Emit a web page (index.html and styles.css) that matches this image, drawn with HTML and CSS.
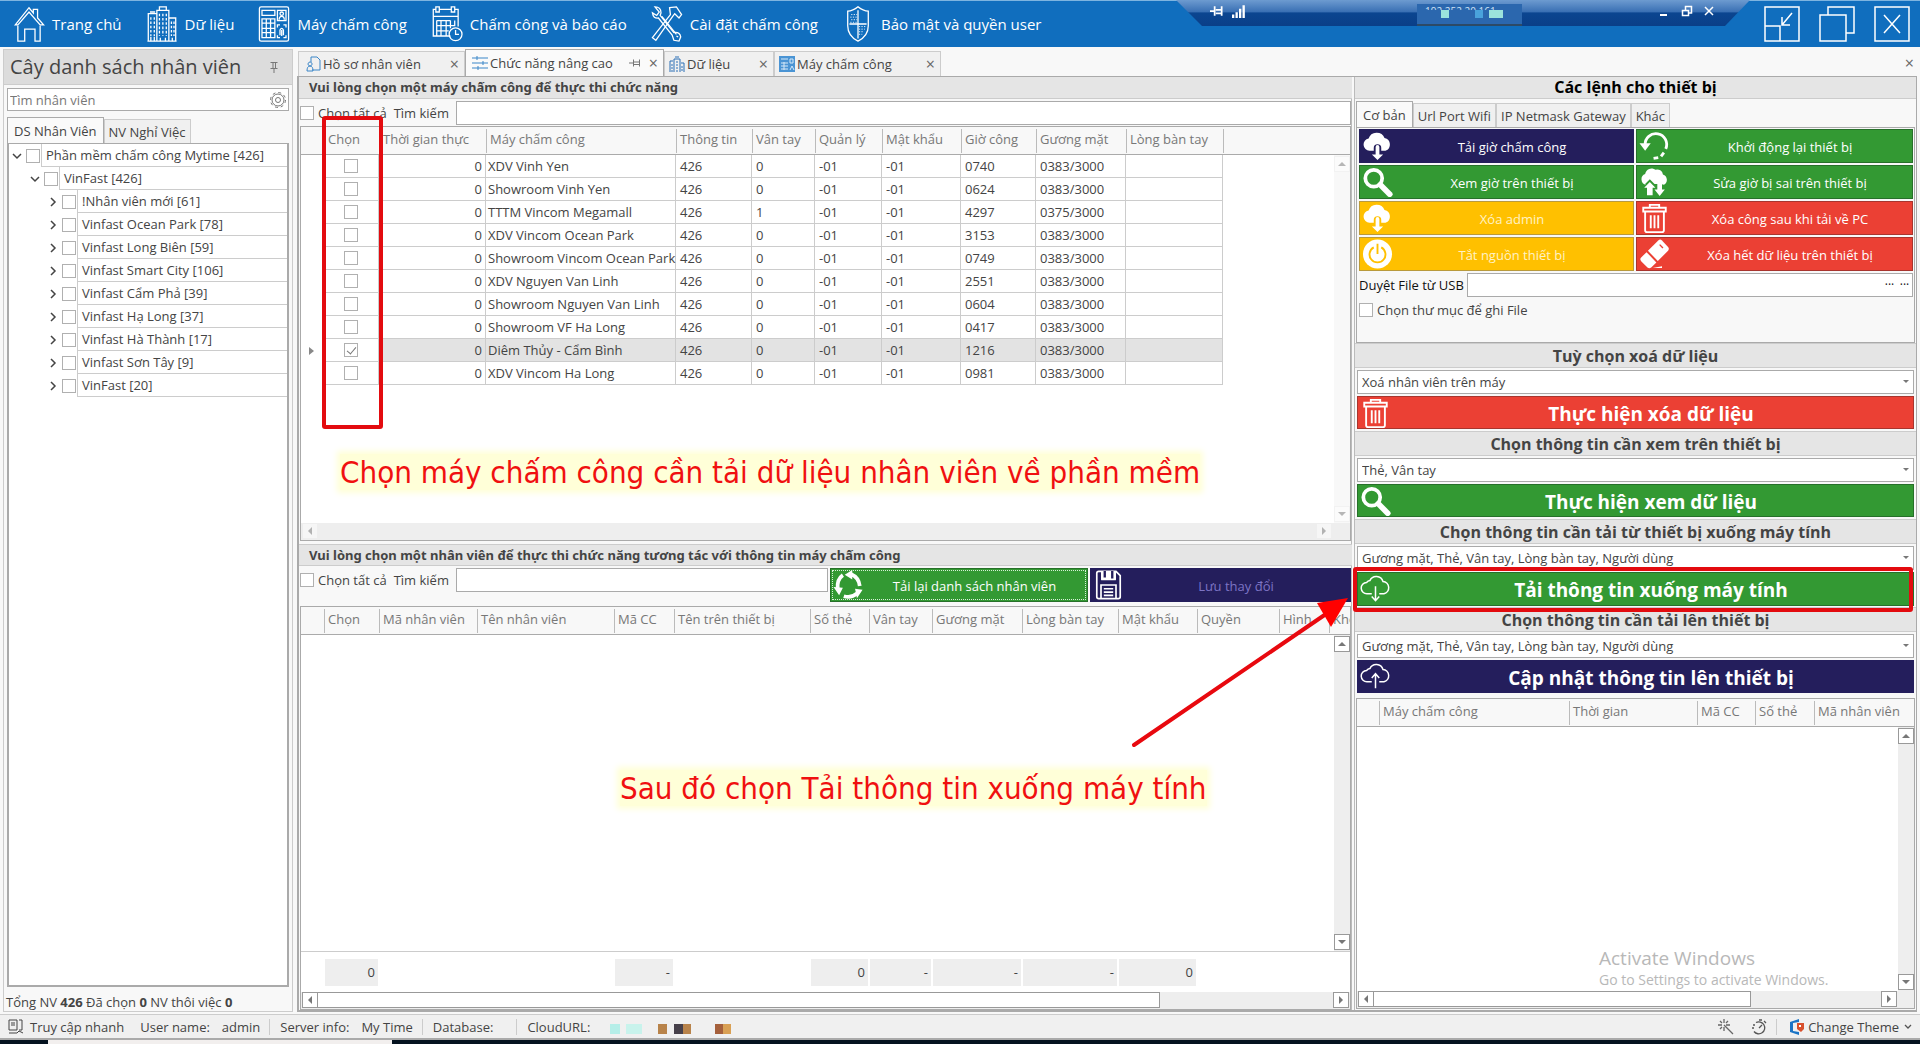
FILE: index.html
```html
<!DOCTYPE html>
<html lang="vi">
<head>
<meta charset="utf-8">
<title>Phần mềm chấm công Mytime</title>
<link rel="stylesheet" href="styles.css">
</head>
<body>
<svg class="defs" aria-hidden="true">
  <symbol id="i-cloud-down" viewBox="0 0 32 32"><path fill="currentColor" d="M12 21H7.500a6.500 6.500 0 0 1-1-12.900A9 9 0 0 1 23.500 7.500 7 7 0 0 1 24.500 21H20v-3a4 4 0 0 0-8 0z"/><path fill="currentColor" d="M14 17a2 2 0 0 1 4 0v8h4l-6 6-6-6h4z"/></symbol>
  <symbol id="i-cloud-updown" viewBox="0 0 32 32"><path fill="currentColor" d="M7 19a6 6 0 0 1-1-11.500A7 7 0 0 1 17 3a6 6 0 0 1 8 5 6 6 0 0 1 1 11l-3-1h-7l-5-5-5 5z"/><path fill="currentColor" d="M8 30V22H5l6-6 6 6h-3v8zM19 18h5v6h3l-5.500 7-5.500-7h3z"/></symbol>
  <symbol id="i-search" viewBox="0 0 32 32"><circle cx="12" cy="12" r="9" fill="none" stroke="currentColor" stroke-width="4"/><path d="M19 19l10 10" stroke="currentColor" stroke-width="6" stroke-linecap="round"/></symbol>
  <symbol id="i-restart" viewBox="0 0 32 32"><g fill="none" stroke="currentColor" stroke-width="3"><path d="M6 15A11.500 11.500 0 1 1 28 19"/><path d="M26 23l-3 4M20 28.500l-5 .8"/></g><path d="M0 13h12l-6 8z" fill="currentColor"/></symbol>
  <symbol id="i-trash" viewBox="0 0 32 32"><g fill="none" stroke="currentColor" stroke-width="2"><path d="M4 5h24v4H4zM11 5V2h10v3M6 9v20q0 2 2 2h16q2 0 2-2V9" /><path d="M12 13v14M16 13v14M20 13v14"/></g></symbol>
  <symbol id="i-power" viewBox="0 0 32 32"><circle cx="16" cy="16" r="15.500" fill="#fff"/><g fill="none" stroke="#ffc000" stroke-width="2"><path d="M12 9a8.500 8.500 0 1 0 8 0M16 5v11"/></g></symbol>
  <symbol id="i-eraser" viewBox="0 0 32 32"><path fill="currentColor" d="M20 1.500q2-2 4 0l6.500 7q1.500 2 0 4L19.500 23.500 9 12.500z"/><path fill="currentColor" d="M7.500 14l10.500 11-5.500 5.500q-2 1.500-4 0L2 24q-2-2-.5-4zM14 31l10-2v2z"/><path d="M21.500 6l3.500 3.500" stroke="#eb4034" stroke-width="1.500"/></symbol>
  <symbol id="i-cloud-line-down" viewBox="0 0 32 32"><g fill="none" stroke="currentColor" stroke-width="1.600"><path d="M12 21H7a6 6 0 0 1-.5-12A6 6 0 0 1 10 7a7.500 7.500 0 0 1 14 1 6.600 6.600 0 0 1 1 13h-5M16 13v15M12 24l4 4.500 4-4.500"/></g></symbol>
  <symbol id="i-cloud-line-up" viewBox="0 0 32 32"><g fill="none" stroke="currentColor" stroke-width="1.600"><path d="M12 21H7a6 6 0 0 1-.5-12A6 6 0 0 1 10 7a7.500 7.500 0 0 1 14 1 6.600 6.600 0 0 1 1 13h-5M16 28V13M12 17l4-4.500 4 4.500"/></g></symbol>
  <symbol id="i-recycle" viewBox="0 0 32 32"><g fill="none" stroke="currentColor" stroke-width="4"><path d="M10 5.500Q3.500 10 4.500 20"/><path d="M19 4.500Q27 8 28 17"/><path d="M25 25Q19 30.500 11 28"/></g><path fill="currentColor" d="M0 18l10 1-4 8zM20 0v10l-8-5zM23 20l8 1-6 9z"/></symbol>
  <symbol id="i-save" viewBox="0 0 28 32"><g fill="none" stroke="currentColor" stroke-width="1.800"><path d="M1.500 3.500q0-2 2-2H22l4.500 4.500v22.500q0 2-2 2h-21q-2 0-2-2z"/><path d="M6 30V16h16v14M9 20h10M9 23.500h10M9 27h10"/></g><path fill="currentColor" d="M6 1h16v9q0 1-1 1H7q-1 0-1-1z"/><path d="M10 1v7M18 1v8" stroke="#241e5c" stroke-width="2.500"/></symbol>
  <symbol id="i-pin" viewBox="0 0 12 12"><path d="M0 6h4M4.500 2.500v7M5 5h5M5 7.500h5M10.500 2.500v7" fill="none" stroke="currentColor"/></symbol>
</svg>

<header class="topbar">
  <nav class="menu">
    <a href="#" class="menu-item"><svg class="menu-icon" viewBox="0 0 36 42"><g fill="none" stroke="#fff" stroke-width="1.500"><path d="M2 22L18 2l5 6V4h5v10l7 8h-4L18 7 5 22zM5 23v18h8V27h12v14h6V23"/></g></svg>Trang chủ</a>
    <a href="#" class="menu-item"><svg class="menu-icon" viewBox="0 0 36 42"><g fill="none" stroke="#fff" stroke-width="1.500"><path d="M2 41V9h10M12 41V5h14v36M15 5V1h8v4M26 14h8v27M1 41h34M4 7h6"/><path d="M15 9v26M19 9v26M23 9v26M5 13v22M9 13v22M29 18v17M32 18v17" stroke-dasharray="3 2"/><path d="M5 36v5M9 36v5M16 37v4M22 37v4M30 37v4"/></g></svg>Dữ liệu</a>
    <a href="#" class="menu-item"><svg class="menu-icon" viewBox="0 0 36 42"><g fill="none" stroke="#fff" stroke-width="1.500"><rect x="1" y="1" width="34" height="40" rx="2"/><path d="M4 5h15v6H4zM4 15h15v22H4zM4 20h15M4 26h15M4 31h15M9 15v22M14 15v22M22 5h10v12H22zM24 16q0-4 3-4t3 4"/><circle cx="27" cy="9" r="2"/><path d="M22 25v-3h3M29 22h3v3M22 34v3h3M29 37h3v-3M25 34v-6q2-4 4 0v6M27 28v7"/></g></svg>Máy chấm công</a>
    <a href="#" class="menu-item"><svg class="menu-icon" viewBox="0 0 36 42"><g fill="none" stroke="#fff" stroke-width="1.500"><path d="M22 35H2V4h3M9 4h14M27 4h4v20M2 12h29M5 1h4v6H5zM23 1h4v6h-4zM6 17h16M6 23h16M6 29h14M6 17v12M11 17v18M17 17v18M22 17v9M27 17v6h-5M6 35V29"/><circle cx="28" cy="33" r="7.500"/><path d="M28 28v5h4"/></g></svg>Chấm công và báo cáo</a>
    <a href="#" class="menu-item"><svg class="menu-icon" viewBox="0 0 36 42"><g fill="none" stroke="#fff" stroke-width="1.500"><path d="M4 1q7 0 7 7l-1 3 16 20q7-1 8 5l-2 5-6-1-2-6L8 14q-6 1-7-6l5 3 3-4z"/><path d="M21 2l8-1 6 9-3 4-5-5-3 4L5 40l-4-3 21-27zM29 35l2 1M12 12l17 21"/></g></svg>Cài đặt chấm công</a>
    <a href="#" class="menu-item"><svg class="menu-icon menu-icon-narrow" viewBox="0 0 28 42"><g fill="none" stroke="#fff" stroke-width="1.500"><path d="M14 1q6 5 12 5v17q0 12-12 18Q2 35 2 23V6q6 0 12-5z"/><path d="M14 5v33M4 21h20"/></g><path d="M6 10h7M5 13h8M6 16h7M5 19h8M15 24h8M15 27h7M15 30h6M15 33h4" stroke="#fff" stroke-dasharray="1.500 1.500"/></svg>Bảo mật và quyền user</a>
  </nav>
  <div class="window-controls">
    <button aria-label="Thu nhỏ"><svg viewBox="0 0 36 36"><path d="M1 1h34v34H1zM1 20h15v15M28 7L18 19M18 11v8h8" fill="none" stroke="#fff" stroke-width="1.500"/></svg></button>
    <button aria-label="Khôi phục"><svg viewBox="0 0 36 36"><path d="M1 9h26v26H1zM9 9V1h26v26h-8" fill="none" stroke="#fff" stroke-width="1.500"/></svg></button>
    <button aria-label="Đóng"><svg viewBox="0 0 36 36"><path d="M1 1h34v34H1zM10 9l16 18M26 9L10 27" fill="none" stroke="#fff" stroke-width="1.500"/></svg></button>
  </div>
  <div class="remote-bar">
    <svg class="remote-pin" viewBox="0 0 12 12"><path d="M0 6h4M4 2v8M5 5h5M5 8h5M10 2v8" stroke="#fff" stroke-width="1.500" fill="none"/></svg>
    <svg class="remote-signal" viewBox="0 0 12 12"><path d="M1 12V9M4 12V7M7 12V4M10 12V1" stroke="#fff" stroke-width="2"/></svg>
    <div class="remote-host"><span>192.252.20.161</span><div class="remote-mask"><i></i><i></i><i></i></div></div>
    <svg class="remote-win" viewBox="0 0 56 14"><path d="M0 11h7" stroke="#fff" stroke-width="2"/><path d="M22.500 6.500h6v5h-6zM25.500 6V2.500h6V9H29M45 3l8 8M53 3l-8 8" fill="none" stroke="#fff" stroke-width="1.500"/></svg>
  </div>
</header>

<main class="workspace">
  <aside class="sidebar">
    <h1 class="sidebar-title">Cây danh sách nhân viên<svg class="pin pin-down"><use href="#i-pin"/></svg></h1>
    <div class="search-box"><input type="text" placeholder="Tìm nhân viên" aria-label="Tìm nhân viên"><svg viewBox="0 0 18 18"><g fill="none" stroke="#777"><circle cx="9" cy="9" r="2.500"/><circle cx="9" cy="9" r="6"/><circle cx="9" cy="9" r="7.500" stroke-dasharray="3 2.900"/></g></svg></div>
    <div class="tabs side-tabs"><button class="tab active">DS Nhân Viên</button><button class="tab">NV Nghỉ Việc</button></div>
    <ul class="tree">
      <li class="lv0 open"><svg viewBox="0 0 10 10"><path d="M1 3l4 4 4-4"/></svg><label><input type="checkbox"><span>Phần mềm chấm công Mytime [426]</span></label></li>
      <li class="lv1 open"><svg viewBox="0 0 10 10"><path d="M1 3l4 4 4-4"/></svg><label><input type="checkbox"><span>VinFast [426]</span></label></li>
      <li class="lv2"><svg viewBox="0 0 10 10"><path d="M3 1l4 4-4 4"/></svg><label><input type="checkbox"><span>!Nhân viên mới [61]</span></label></li>
      <li class="lv2"><svg viewBox="0 0 10 10"><path d="M3 1l4 4-4 4"/></svg><label><input type="checkbox"><span>Vinfast Ocean Park [78]</span></label></li>
      <li class="lv2"><svg viewBox="0 0 10 10"><path d="M3 1l4 4-4 4"/></svg><label><input type="checkbox"><span>Vinfast Long Biên [59]</span></label></li>
      <li class="lv2"><svg viewBox="0 0 10 10"><path d="M3 1l4 4-4 4"/></svg><label><input type="checkbox"><span>Vinfast Smart City [106]</span></label></li>
      <li class="lv2"><svg viewBox="0 0 10 10"><path d="M3 1l4 4-4 4"/></svg><label><input type="checkbox"><span>Vinfast Cẩm Phả [39]</span></label></li>
      <li class="lv2"><svg viewBox="0 0 10 10"><path d="M3 1l4 4-4 4"/></svg><label><input type="checkbox"><span>Vinfast Hạ Long [37]</span></label></li>
      <li class="lv2"><svg viewBox="0 0 10 10"><path d="M3 1l4 4-4 4"/></svg><label><input type="checkbox"><span>Vinfast Hà Thành [17]</span></label></li>
      <li class="lv2"><svg viewBox="0 0 10 10"><path d="M3 1l4 4-4 4"/></svg><label><input type="checkbox"><span>Vinfast Sơn Tây [9]</span></label></li>
      <li class="lv2"><svg viewBox="0 0 10 10"><path d="M3 1l4 4-4 4"/></svg><label><input type="checkbox"><span>VinFast [20]</span></label></li>
    </ul>
    <p class="totals">Tổng NV <b>426</b> Đã chọn <b>0</b> NV thôi việc <b>0</b></p>
  </aside>

  <section class="document">
    <div class="doc-tabs">
      <button class="doc-tab tab-profile"><svg viewBox="0 0 16 16"><path d="M6 1h6l3 3v10H7M6 1v5M5 6a2 2 0 1 0 .1 0M2 15q0-5 3-5t3 5z" fill="none" stroke="#3b86c8"/></svg><span>Hồ sơ nhân viên</span><i>×</i></button>
      <button class="doc-tab tab-advanced active"><svg viewBox="0 0 16 16"><path d="M0 3h16M0 8h16M0 13h16M5 1v4M11 6v4M6 11v4" stroke="#3b86c8"/></svg><span>Chức năng nâng cao</span><svg class="pin"><use href="#i-pin"/></svg><i>×</i></button>
      <button class="doc-tab tab-data"><svg viewBox="0 0 16 16"><path d="M1 16V5h3M5 16V3h6v13M12 7h3v9M6 1h4" fill="none" stroke="#2a6fb5"/><path d="M3 8v8M8 5v11M13 10v6" stroke="#2a6fb5" stroke-dasharray="2 1"/></svg><span>Dữ liệu</span><i>×</i></button>
      <button class="doc-tab tab-device"><svg viewBox="0 0 16 16"><path d="M0 0h16v16H0z" fill="#4a94d4"/><path d="M2 3h7M2 7h7M2 10h7M2 13h7M5 6v8M11 3h3v4h-3zM11 14l2-4 2 4" stroke="#d6e9f8" fill="none"/></svg><span>Máy chấm công</span><i>×</i></button>
      <button class="close-all" aria-label="Đóng tab">×</button>
    </div>

    <div class="doc-body">
      <div class="center">
        <h2 class="bar-title">Vui lòng chọn một máy chấm công để thực thi chức năng</h2>
        <div class="filter"><label class="check"><input type="checkbox">Chọn tất cả</label><label for="find-device">Tìm kiếm</label><input id="find-device" class="field" type="text"></div>
        <div class="grid device-grid">
          <table>
            <colgroup><col style="width:23px"><col style="width:55px"><col style="width:107px"><col style="width:190px"><col style="width:76px"><col style="width:63px"><col style="width:67px"><col style="width:79px"><col style="width:75px"><col style="width:90px"><col style="width:97px"><col></colgroup>
            <thead><tr><th></th><th>Chọn</th><th>Thời gian thực</th><th>Máy chấm công</th><th>Thông tin</th><th>Vân tay</th><th>Quản lý</th><th>Mật khẩu</th><th>Giờ công</th><th>Gương mặt</th><th>Lòng bàn tay</th><th></th></tr></thead>
            <tbody>
              <tr><td></td><td><input type="checkbox" aria-label="Chọn"></td><td>0</td><td>XDV Vinh Yen</td><td>426</td><td>0</td><td>-01</td><td>-01</td><td>0740</td><td>0383/3000</td><td></td><td></td></tr>
              <tr><td></td><td><input type="checkbox" aria-label="Chọn"></td><td>0</td><td>Showroom Vinh Yen</td><td>426</td><td>0</td><td>-01</td><td>-01</td><td>0624</td><td>0383/3000</td><td></td><td></td></tr>
              <tr><td></td><td><input type="checkbox" aria-label="Chọn"></td><td>0</td><td>TTTM Vincom Megamall</td><td>426</td><td>1</td><td>-01</td><td>-01</td><td>4297</td><td>0375/3000</td><td></td><td></td></tr>
              <tr><td></td><td><input type="checkbox" aria-label="Chọn"></td><td>0</td><td>XDV Vincom Ocean Park</td><td>426</td><td>0</td><td>-01</td><td>-01</td><td>3153</td><td>0383/3000</td><td></td><td></td></tr>
              <tr><td></td><td><input type="checkbox" aria-label="Chọn"></td><td>0</td><td>Showroom Vincom Ocean Park</td><td>426</td><td>0</td><td>-01</td><td>-01</td><td>0749</td><td>0383/3000</td><td></td><td></td></tr>
              <tr><td></td><td><input type="checkbox" aria-label="Chọn"></td><td>0</td><td>XDV Nguyen Van Linh</td><td>426</td><td>0</td><td>-01</td><td>-01</td><td>2551</td><td>0383/3000</td><td></td><td></td></tr>
              <tr><td></td><td><input type="checkbox" aria-label="Chọn"></td><td>0</td><td>Showroom Nguyen Van Linh</td><td>426</td><td>0</td><td>-01</td><td>-01</td><td>0604</td><td>0383/3000</td><td></td><td></td></tr>
              <tr><td></td><td><input type="checkbox" aria-label="Chọn"></td><td>0</td><td>Showroom VF Ha Long</td><td>426</td><td>0</td><td>-01</td><td>-01</td><td>0417</td><td>0383/3000</td><td></td><td></td></tr>
              <tr class="selected"><td><svg viewBox="0 0 6 8"><path d="M0 0l5 4-5 4z" fill="#888"/></svg></td><td><input type="checkbox" aria-label="Chọn" checked></td><td>0</td><td>Diêm Thủy - Cẩm Bình</td><td>426</td><td>0</td><td>-01</td><td>-01</td><td>1216</td><td>0383/3000</td><td></td><td></td></tr>
              <tr><td></td><td><input type="checkbox" aria-label="Chọn"></td><td>0</td><td>XDV Vincom Ha Long</td><td>426</td><td>0</td><td>-01</td><td>-01</td><td>0981</td><td>0383/3000</td><td></td><td></td></tr>
            </tbody>
          </table>
          <div class="vscroll off"><span class="arr up"></span><span class="arr down"></span></div>
          <div class="hscroll off"><span class="arr left"></span><span class="arr right"></span></div>
        </div>

        <h2 class="bar-title second">Vui lòng chọn một nhân viên để thực thi chức năng tương tác với thông tin máy chấm công</h2>
        <div class="filter filter-actions"><label class="check"><input type="checkbox">Chọn tất cả</label><label for="find-staff">Tìm kiếm</label><input id="find-staff" class="field" type="text">
          <button class="cmd green focus"><svg><use href="#i-recycle"/></svg><span>Tải lại danh sách nhân viên</span></button>
          <button class="cmd navy muted"><svg><use href="#i-save"/></svg><span>Lưu thay đổi</span></button>
        </div>
        <div class="grid staff-grid">
          <table>
            <colgroup><col style="width:23px"><col style="width:55px"><col style="width:98px"><col style="width:137px"><col style="width:60px"><col style="width:136px"><col style="width:59px"><col style="width:63px"><col style="width:90px"><col style="width:96px"><col style="width:79px"><col style="width:82px"><col style="width:50px"><col></colgroup>
            <thead><tr><th></th><th>Chọn</th><th>Mã nhân viên</th><th>Tên nhân viên</th><th>Mã CC</th><th>Tên trên thiết bị</th><th>Số thẻ</th><th>Vân tay</th><th>Gương mặt</th><th>Lòng bàn tay</th><th>Mật khẩu</th><th>Quyền</th><th>Hình</th><th>Khó</th></tr></thead>
          </table>
          <div class="vscroll"><span class="arr up"></span><span class="arr down"></span></div>
          <div class="summary"><span></span><b>0</b><span></span><span></span><b>-</b><span></span><b>0</b><b>-</b><b>-</b><b>-</b><b>0</b></div>
          <div class="hscroll"><span class="arr left"></span><span class="thumb"></span><span class="arr right"></span></div>
        </div>
      </div>

      <div class="commands">
        <h2 class="bar-title big dark">Các lệnh cho thiết bị</h2>
        <div class="tabs cmd-tabs"><button class="tab active">Cơ bản</button><button class="tab">Url Port Wifi</button><button class="tab">IP Netmask Gateway</button><button class="tab">Khác</button></div>
        <div class="tab-page">
          <div class="cmd-grid">
            <button class="cmd navy"><svg><use href="#i-cloud-down"/></svg><span>Tải giờ chấm công</span></button>
            <button class="cmd green"><svg><use href="#i-restart"/></svg><span>Khởi động lại thiết bị</span></button>
            <button class="cmd green"><svg><use href="#i-search"/></svg><span>Xem giờ trên thiết bị</span></button>
            <button class="cmd green"><svg><use href="#i-cloud-updown"/></svg><span>Sửa giờ bị sai trên thiết bị</span></button>
            <button class="cmd amber"><svg><use href="#i-cloud-down"/></svg><span>Xóa admin</span></button>
            <button class="cmd red"><svg><use href="#i-trash"/></svg><span>Xóa công sau khi tải về PC</span></button>
            <button class="cmd amber"><svg><use href="#i-power"/></svg><span>Tắt nguồn thiết bị</span></button>
            <button class="cmd red"><svg><use href="#i-eraser"/></svg><span>Xóa hết dữ liệu trên thiết bị</span></button>
          </div>
          <div class="usb"><label for="usb">Duyệt File từ USB</label><div class="field"><input id="usb" type="text"><button>···</button><button>···</button></div></div>
          <label class="check"><input type="checkbox">Chọn thư mục để ghi File</label>
        </div>
        <div class="action">
          <h3 class="bar-title big"><label for="opt-del">Tuỳ chọn xoá dữ liệu</label></h3>
          <div class="combo"><select id="opt-del"><option>Xoá nhân viên trên máy</option></select></div>
          <button class="cmd red large"><svg><use href="#i-trash"/></svg><span>Thực hiện xóa dữ liệu</span></button>
        </div>
        <div class="action">
          <h3 class="bar-title big"><label for="opt-view">Chọn thông tin cần xem trên thiết bị</label></h3>
          <div class="combo"><select id="opt-view"><option>Thẻ, Vân tay</option></select></div>
          <button class="cmd green large"><svg><use href="#i-search"/></svg><span>Thực hiện xem dữ liệu</span></button>
        </div>
        <div class="action">
          <h3 class="bar-title big"><label for="opt-load">Chọn thông tin cần tải từ thiết bị xuống máy tính</label></h3>
          <div class="combo"><select id="opt-load"><option>Gương mặt, Thẻ, Vân tay, Lòng bàn tay, Người dùng</option></select></div>
          <div class="marked"><button class="cmd green large"><svg><use href="#i-cloud-line-down"/></svg><span>Tải thông tin xuống máy tính</span></button></div>
        </div>
        <div class="action">
          <h3 class="bar-title big"><label for="opt-push">Chọn thông tin cần tải lên thiết bị</label></h3>
          <div class="combo"><select id="opt-push"><option>Gương mặt, Thẻ, Vân tay, Lòng bàn tay, Người dùng</option></select></div>
          <button class="cmd navy large"><svg><use href="#i-cloud-line-up"/></svg><span>Cập nhật thông tin lên thiết bị</span></button>
        </div>
        <div class="grid result-grid">
          <table>
            <colgroup><col style="width:22px"><col style="width:190px"><col style="width:128px"><col style="width:58px"><col style="width:59px"><col></colgroup>
            <thead><tr><th></th><th>Máy chấm công</th><th>Thời gian</th><th>Mã CC</th><th>Số thẻ</th><th>Mã nhân viên</th></tr></thead>
          </table>
          <div class="watermark"><strong>Activate Windows</strong><span>Go to Settings to activate Windows.</span></div>
          <div class="vscroll"><span class="arr up"></span><span class="arr down"></span></div>
          <div class="hscroll"><span class="arr left"></span><span class="thumb"></span><span class="arr right"></span></div>
        </div>
      </div>
    </div>
  </section>
</main>

<footer class="status">
  <svg class="status-icon" viewBox="0 0 16 16"><path d="M1 1h8v10H1zM3 4h4M3 6h4M11 1h3v10h-3M1 14h8l2-2 4 2" fill="none" stroke="#444"/></svg>
  <span class="st-quick">Truy cập nhanh</span><span class="st-user">User name:</span><span class="st-admin">admin</span>
  <span class="st-server">Server info:</span><span class="st-name">My Time</span>
  <span class="st-db">Database:</span><span class="st-url">CloudURL:</span>
  <svg class="mosaic" viewBox="0 0 122 10"><path d="M0 0h10v10H0z" fill="#b5eee8"/><path d="M16 0h16v10H16z" fill="#c8f3ec"/><path d="M48 0h9v10h-9zM73 0h8v10h-8z" fill="#b8834a"/><path d="M64 0h9v10h-9z" fill="#46404a"/><path d="M105 0h8v10h-8z" fill="#a5603c"/><path d="M113 0h8v10h-8z" fill="#d9a054"/></svg>
  <svg class="status-icon push" viewBox="0 0 16 16"><path d="M6 6l9 9M6 0v4M6 8v4M0 6h4M8 6h4M2 2l2 2M10 2L8 4M2 10l2-2" stroke="#666" stroke-width="1.300"/></svg>
  <svg class="status-icon" viewBox="0 0 16 16"><path d="M5 3.500a6 6 0 1 1-2 9M8 9l3-3M8 1h3M13 2l2 2M2 6h2M1 9h2" fill="none" stroke="#555" stroke-width="1.300"/></svg>
  <button class="theme"><svg viewBox="0 0 16 16"><path d="M10 0L1 3v10l9 3v-3l-6-1V4l6-1z" fill="#1b74c5"/><path d="M8 4h7v6l-3 3-4-3z" fill="#d8502c"/><path d="M10 6h2v2h-2z" fill="#fff"/></svg>Change Theme<svg class="caret" viewBox="0 0 8 6"><path d="M1 1l3 3 3-3" fill="none" stroke="#555" stroke-width="1.300"/></svg></button>
</footer>
<div class="taskbar"><span></span></div>

<div class="note-box"></div>
<p class="note note-one"><span>Chọn máy chấm công cần tải dữ liệu nhân viên về phần mềm</span></p>
<p class="note note-two"><span>Sau đó chọn Tải thông tin xuống máy tính</span></p>
<svg class="note-arrow" viewBox="0 0 220 152"><path d="M4 148L196 17" stroke="#e8090f" stroke-width="4" stroke-linecap="round"/><path d="M218 1L201 30 187 6z" fill="#f00"/></svg>
</body>
</html>
```
FILE: styles.css
```css
* { box-sizing: border-box; }
body {
  margin: 0;
  min-height: 100vh;
  display: flex;
  flex-direction: column;
  position: relative;
  overflow: hidden;
  font: 13px/16px "Open Sans", "Noto Sans", sans-serif;
  color: #444;
  background: #f8f8f8;
}
h1, h2, h3, p, ul { margin: 0; padding: 0; font-weight: normal; }
button, input, select { font: inherit; color: inherit; margin: 0; padding: 0; border: 0; background: none; border-radius: 0; outline: 0; }
i { font-style: normal; }
.defs { position: absolute; width: 0; height: 0; }

input[type=checkbox] { appearance: none; flex: none; width: 14px; height: 14px; border: 1px solid #b0b0b0; background: #fff; display: block; }
input[type=checkbox]:checked::after { content: ""; display: block; width: 4px; height: 8px; margin: 1px 4px; border: solid #777; border-width: 0 1px 1px 0; transform: rotate(40deg); }

/* top bar */
.topbar { position: relative; height: 47px; display: flex; align-items: center; justify-content: space-between; padding: 0 10px 0 11px; background: #106ebe; border-top: 1px solid #7db4e0; color: #fff; }
.menu { display: flex; }
.menu-item { display: flex; align-items: center; gap: 5px; color: #fff; text-decoration: none; font-size: 15px; white-space: nowrap; margin-right: 22px; }
.menu-icon { width: 36px; height: 36px; }
.menu-icon-narrow { width: 28px; margin: 0 4px; }
.window-controls { display: flex; gap: 19px; }
.window-controls button, .window-controls svg { display: block; width: 36px; height: 36px; }
.remote-bar { position: absolute; top: -1px; right: 170px; width: 574px; height: 26px; display: flex; align-items: flex-start; padding: 4px 30px 0 34px; background: linear-gradient(#6d9bd0 0, #3a70b4 45%, #0b4590 50%, #0a3f88 100%); clip-path: polygon(0 0, 26px 100%, 549px 100%, 100% 0); }
.remote-bar svg { flex: none; }
.remote-pin { width: 14px; height: 14px; }
.remote-signal { width: 14px; height: 14px; margin-left: 8px; }
.remote-host { width: 105px; height: 22px; margin-left: 171px; padding: 2px 8px 0; background: #2b67ae; border-bottom: 2px solid #2d4a66; }
.remote-host span { display: block; height: 4px; font-size: 10px; line-height: 10px; color: #cfe2f5; }
.remote-mask { position: relative; display: flex; height: 13px; padding: 0 10px 0 16px; background: #2b67ae; }
.remote-mask i { width: 8px; height: 8px; background: #9be3dc; }
.remote-mask i:nth-child(2) { background: #4aa3dc; margin-left: 26px; }
.remote-mask i:nth-child(3) { width: 14px; margin-left: 6px; }
.remote-win { width: 56px; height: 14px; margin-left: 138px; }

/* workspace */
.workspace { flex: 1; min-height: 0; display: flex; gap: 4px; padding: 2px 3px 2px; }
.sidebar { flex: none; width: 290px; display: flex; flex-direction: column; border: 1px solid #ccc; padding: 0 3px; }
.sidebar-title { display: flex; align-items: center; justify-content: space-between; margin: 0 -3px; height: 35px; padding: 0 12px 0 6px; font-size: 20px; line-height: 28px; background: #dcdcdc; border-bottom: 1px solid #ccc; }
.pin { flex: none; width: 12px; height: 12px; color: #777; }
.pin-down { transform: rotate(-90deg); }
.search-box { display: flex; align-items: center; height: 23px; margin-top: 3px; border: 1px solid #aaa; background: #fff; padding: 0 1px 0 2px; }
.search-box input { flex: 1; min-width: 0; }
.search-box input::placeholder { color: #777; opacity: 1; }
.search-box svg { width: 18px; height: 18px; }
.tabs { display: flex; align-items: flex-end; }
.tab { height: 24px; padding: 0 4px; border: 1px solid #ccc; border-bottom: 0; background: #f0f0f0; white-space: nowrap; }
.tab.active { height: 26px; padding: 0 6px; background: #fafafa; border-color: #aaa; }
.side-tabs { margin-top: 6px; }
.tree { list-style: none; flex: 1; border: 2px solid #aaa; border-width: 1px 2px 2px; background: #fff; }
.tree li { display: flex; align-items: center; gap: 4px; height: 23px; }
.tree li > svg { flex: none; width: 10px; height: 10px; fill: none; stroke: #444; stroke-width: 1.5; }
.tree label { flex: 1; display: flex; align-items: center; }
.tree label span { flex: 1; height: 23px; line-height: 22px; margin-left: 1px; padding-left: 4px; border-left: 1px solid #ccc; border-bottom: 1px solid #ccc; }
.lv0 { padding-left: 3px; }
.lv1 { padding-left: 21px; }
.lv2 { padding-left: 39px; }
.totals { height: 24px; line-height: 30px; margin-left: -1px; white-space: nowrap; }

.document { flex: 1; min-width: 0; display: flex; flex-direction: column; }
.doc-tabs { display: flex; align-items: flex-end; height: 27px; padding-left: 1px; }
.doc-tab { display: flex; align-items: center; height: 25px; padding: 0 5px 1px 6px; border: 1px solid #ccc; border-bottom: 0; background: #f0f0f0; white-space: nowrap; text-align: left; }
.doc-tab.active { height: 27px; background: #fafafa; border-color: #aaa; }
.doc-tab svg { flex: none; width: 16px; height: 16px; margin-right: 2px; }
.doc-tab span { flex: 1; }
.doc-tab .pin { width: 12px; height: 12px; margin-right: 8px; }
.doc-tab i, .close-all { font-size: 16px; color: #666; }
.tab-profile { width: 167px; }
.tab-advanced { width: 199px; }
.tab-data { width: 110px; padding-left: 4px; }
.tab-device { width: 167px; padding-left: 4px; }
.close-all { margin-left: auto; align-self: center; padding-right: 3px; }
.doc-body { flex: 1; min-height: 0; display: flex; gap: 2px; border: 1px solid #aaa; border-width: 1px 1px 2px 2px; }
.center { flex: 1; min-width: 0; display: flex; flex-direction: column; padding-left: 1px; border-right: 1px solid #bbb; }
.commands { flex: none; width: 562px; display: flex; flex-direction: column; border-left: 1px solid #bbb; padding: 0 1px; }

.bar-title { height: 22px; line-height: 21px; margin: 0 -1px; padding-left: 10px; font-family: "Noto Sans", sans-serif; font-size: 13px; font-weight: bold; background: #e5e5e5; border-bottom: 1px solid #ccc; white-space: nowrap; }
.bar-title.big { padding: 0; text-align: center; font-family: "Open Sans", sans-serif; font-size: 16px; }
.bar-title.dark { color: #000; }
.bar-title.second { margin-top: 3px; border-top: 1px solid #ccc; }
.filter { display: flex; align-items: center; gap: 7px; padding: 2px 0 1px; }
.filter label { white-space: nowrap; }
.check { display: flex; align-items: center; gap: 4px; }
.field { flex: 1; min-width: 0; height: 24px; border: 1px solid #aaa; background: #fff; }
.filter-actions { align-items: flex-start; gap: 2px; padding-bottom: 4px; }
.filter-actions label { line-height: 24px; margin-right: 5px; }
.filter-actions .cmd:nth-of-type(1) { width: 258px; }
.filter-actions .cmd:nth-of-type(2) { width: 261px; }

/* grids */
.grid { display: grid; grid-template-columns: minmax(0, 1fr) 16px; border: 1px solid #aaa; background: #fff; overflow: hidden; }
.grid table { grid-area: 1 / 1 / 3 / 3; width: 100%; align-self: start; table-layout: fixed; border-collapse: separate; border-spacing: 0; }
.grid th { height: 28px; padding: 0; text-align: left; font-weight: normal; color: #777; background: #f8f8f8; border-bottom: 1px solid #aaa; white-space: nowrap; overflow: hidden; }
.grid th::before { content: ""; display: inline-block; vertical-align: middle; width: 1px; height: 24px; background: #bbb; margin-right: 3px; }
.grid th:first-child::before { visibility: hidden; }
.grid td { height: 23px; padding: 0 4px; line-height: 20px; border: solid #ccc; border-width: 0 1px 1px 0; white-space: nowrap; }
.grid td:nth-child(3) { text-align: right; padding-right: 3px; }
.grid td:nth-child(4) { padding: 0 0 0 2px; }
.grid td:first-child, .grid td:last-child { border: 0; }
.grid td:nth-child(2) input { margin: 0 auto; }
.grid td svg { width: 6px; height: 8px; display: block; margin-left: 4px; }
.selected td:not(:first-child):not(:last-child):not(:nth-child(2)) { background: #e3e3e3; }
.device-grid { flex: none; height: 415px; grid-template-rows: 28px 1fr 17px; }
.staff-grid { flex: 1; min-height: 0; grid-template-rows: 28px 1fr 41px 17px; }
.result-grid { flex: 1; min-height: 0; margin: 3px 0 1px; grid-template-rows: 28px 1fr 17px; }
.vscroll { grid-area: 2 / 2 / 3 / 3; display: flex; flex-direction: column; justify-content: space-between; padding: 1px 0; background: #eee; }
.hscroll { grid-area: 3 / 1 / 4 / 3; display: flex; padding: 0 1px 1px; background: #eee; }
.arr { flex: none; width: 16px; height: 16px; display: grid; place-items: center; border: 1px solid #999; background: #fff; }
.arr::after { content: ""; border: 4px solid transparent; }
.arr.up::after { border-top: 0; border-bottom-color: #777; }
.arr.down::after { border-bottom: 0; border-top-color: #777; }
.arr.left::after { border-left: 0; border-right-color: #777; }
.arr.right::after { border-right: 0; border-left-color: #777; }
.arr.right { margin-left: auto; }
.off.vscroll { background: #f8f8f8; }
.off .arr { border-color: #eee; opacity: .5; }
.device-grid .hscroll { padding-right: 18px; }
.thumb { border: 1px solid #999; border-left: 0; background: #fff; }
.staff-grid .thumb { width: 842px; }
.result-grid .thumb { width: 377px; }
.result-grid .hscroll { padding-right: 17px; }
.staff-grid .hscroll { grid-row: 4 / 5; }
.summary { grid-area: 3 / 1 / 4 / 3; display: grid; grid-template-columns: 23px 55px 98px 137px 60px 136px 59px 63px 90px 96px 79px; align-items: center; border-top: 1px solid #ccc; }
.summary b { height: 27px; line-height: 27px; margin: 0 1px; padding-right: 3px; text-align: right; font-weight: normal; background: #eee; }

/* command buttons */
.cmd { height: 34px; display: flex; align-items: center; padding: 0 2px; color: #fff; border: 1px solid; white-space: nowrap; }
.cmd svg { flex: none; width: 31px; height: 30px; }
.cmd span { flex: 1; text-align: center; padding-top: 2px; }
.cmd.large { width: 100%; font-size: 19px; font-weight: bold; }
.navy { background: #241e5c; border-color: #241e5c; }
.green { background: #339933; border-color: #27702a; }
.amber { background: #ffc000; border-color: #b99a3c; }
.amber span { color: #fff2c4; }
.red { background: #eb4034; border-color: #a8352e; }
.muted span { color: #7d74c4; }
.focus { outline: 1px dotted #d8f0d8; outline-offset: -3px; }

.cmd-tabs { margin: 2px 0 0; }
.tab-page { height: 216px; border: 1px solid #aaa; padding: 1px 1px 1px 2px; }
.cmd-grid { display: grid; grid-template-columns: 275px 1fr; gap: 2px; }
.usb { display: flex; align-items: center; gap: 3px; margin-top: 2px; color: #111; white-space: nowrap; }
.usb .field { display: flex; }
.usb input { flex: 1; }
.usb button { width: 15px; font-size: 12px; }
.tab-page > .check { margin-top: 5px; }
.action { display: flex; flex-direction: column; gap: 2px; padding: 0 1px 2px; height: 88px; }
.action .bar-title { height: 25px; line-height: 25px; margin: 0 -2px; border-top: 1px solid #ccc; }
.combo { position: relative; border: 1px solid #aaa; background: #fff; height: 24px; }
.combo select { appearance: none; width: 100%; height: 22px; padding-left: 4px; }
.combo::after { content: ""; position: absolute; right: 4px; top: 9px; border: 3px solid transparent; border-top-color: #777; border-bottom: 0; }
.marked { position: relative; }
.marked::after { content: ""; position: absolute; inset: -5px 1px -6px -4px; border: 4px solid #e30b0f; border-radius: 3px; }

.watermark { grid-area: 2 / 1 / 3 / 2; align-self: end; justify-self: end; width: 299px; padding-bottom: 2px; color: #b8b8b8; }
.watermark strong { display: block; font-weight: normal; font-size: 19px; line-height: 26px; }
.watermark span { font-size: 14px; line-height: 18px; }

/* status bar */
.status { height: 26px; display: flex; align-items: center; padding: 0 8px; background: #f0f0f0; border-top: 1px solid #ccc; border-bottom: 2px solid #aaa; white-space: nowrap; }
.status span { margin-right: 12px; }
.status .st-quick { margin-right: 16px; }
.status-icon { flex: none; width: 16px; height: 16px; margin-right: 6px; }
.status .st-admin, .status .st-name { border-right: 1px solid #ccc; padding-right: 9px; margin-right: 10px; }
.status .st-db { border-right: 1px solid #ccc; padding-right: 23px; margin-right: 10px; }
.status .st-url { margin-right: 20px; }
.mosaic { width: 122px; height: 10px; margin-top: 4px; }
.status .push { margin: 0 17px 0 auto; }
.theme { display: flex; align-items: center; gap: 3px; margin-left: 3px; padding-left: 12px; border-left: 1px solid #ccc; }
.theme svg { width: 16px; height: 16px; }
.theme .caret { width: 8px; height: 6px; margin-left: 2px; }
.taskbar { height: 4px; background: #04121f; padding-left: 48px; }
.taskbar span { display: block; width: 344px; height: 4px; background: #f2efee; }

/* tutorial notes drawn over the window */
.note-box { position: absolute; left: 322px; top: 116px; width: 61px; height: 313px; border: 4px solid #e30b0f; border-radius: 3px; }
.note { position: absolute; font: 31px/36px "DejaVu Sans Condensed", "DejaVu Sans", sans-serif; color: #f01010; white-space: nowrap; }
.note span { background: #ffffd8; box-shadow: 0 0 6px 3px #ffffd8; }
.note-one { left: 340px; top: 454px; }
.note-two { left: 620px; top: 770px; }
.note-arrow { position: absolute; left: 1130px; top: 597px; width: 220px; height: 152px; }
```
